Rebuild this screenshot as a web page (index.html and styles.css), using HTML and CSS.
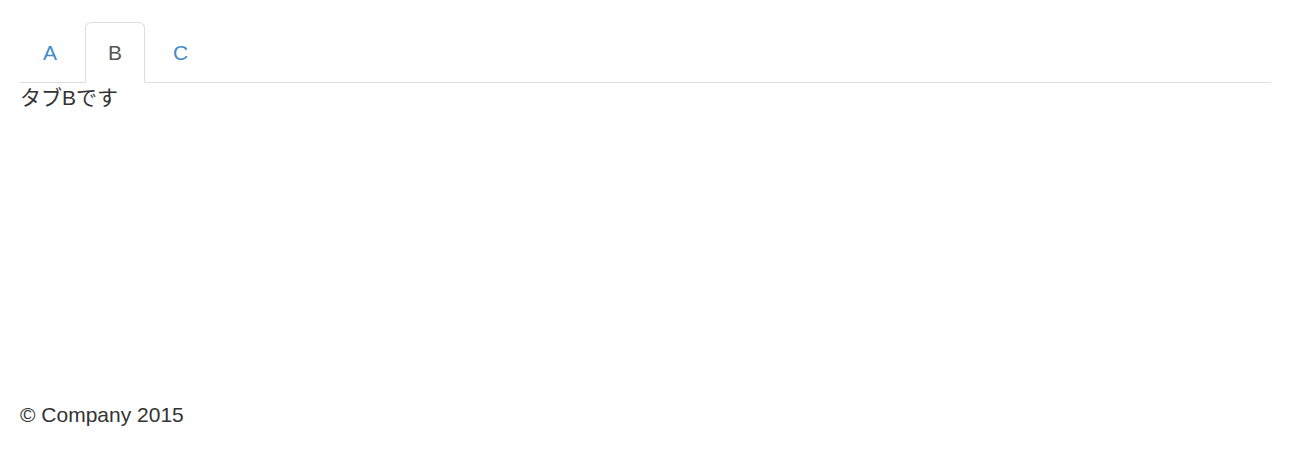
FILE: index.html
```html
<!DOCTYPE html>
<html lang="ja">
<head>
    <meta charset="UTF-8">
    <meta name="viewport" content="width=device-width, initial-scale=1.0">
    <title>Tabs</title>
    <link rel="stylesheet" href="styles.css">
</head>
<body>
    <div class="container">
        <ul class="nav-tabs">
            <li><a href="#a">A</a></li>
            <li class="active"><a href="#b">B</a></li>
            <li><a href="#c">C</a></li>
        </ul>
        <div class="tab-content">
            <div class="tab-pane">タブBです</div>
        </div>
        <footer class="footer">
            <p>&copy; Company 2015</p>
        </footer>
    </div>
</body>
</html>
```

FILE: styles.css
```css
body {
    margin: 0;
    font-family: "Liberation Sans", Arial, "Noto Sans CJK JP", sans-serif;
    font-size: 21px;
    line-height: 30px;
    color: #333;
    background: #fff;
}
.container {
    padding: 22px 29px 0 20px;
}
.nav-tabs {
    list-style: none;
    margin: 0;
    padding: 0;
    display: flex;
    border-bottom: 1px solid #ddd;
}
.nav-tabs li {
    margin-bottom: -1px;
    margin-right: 5px;
}
.nav-tabs a {
    display: block;
    padding: 15px 22px 14px;
    border: 1px solid transparent;
    border-radius: 6px 6px 0 0;
    color: #428bca;
    text-decoration: none;
}
.nav-tabs li.active a {
    color: #555;
    background: #fff;
    border-color: #ddd;
    border-bottom-color: transparent;
}
.tab-pane {
    min-height: 30px;
}
.footer {
    margin-top: 287px;
}
.footer p {
    margin: 0;
}
```
